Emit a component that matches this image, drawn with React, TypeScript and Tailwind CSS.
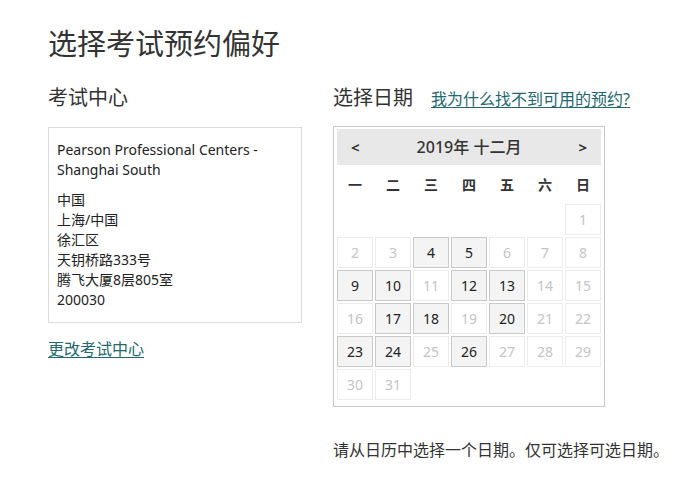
import React from 'react';

const FONT = { fontFamily: '"Noto Sans", "Noto Sans CJK SC", sans-serif' };

const available = new Set([4, 5, 9, 10, 12, 13, 17, 18, 20, 23, 24, 26]);
const weekdays = ['一', '二', '三', '四', '五', '六', '日'];

function Calendar() {
  // December 2019 starts on Sunday -> 6 blanks (Monday first)
  const cells: (number | null)[] = [];
  for (let i = 0; i < 6; i++) cells.push(null);
  for (let d = 1; d <= 31; d++) cells.push(d);

  return (
    <div className="w-[272px] border border-[#c8c8c8] px-[3px] pt-[2px] pb-[6px]">
      <div className="h-[36px] bg-[#e8e8e8] flex items-center justify-between px-[14px] text-[#333]">
        <span className="text-[15px] font-bold">&lt;</span>
        <span className="text-[16px] font-medium">2019年 十二月</span>
        <span className="text-[15px] font-bold">&gt;</span>
      </div>
      <div className="grid grid-cols-7 gap-x-[2px] gap-y-[2px] mt-[1px]">
        {weekdays.map((w) => (
          <div key={w} className="h-[36px] flex items-center justify-center text-[14px] font-bold text-[#333]">
            {w}
          </div>
        ))}
        {cells.map((d, i) =>
          d === null ? (
            <div key={'b' + i} className="h-[31px]" />
          ) : available.has(d) ? (
            <div
              key={d}
              className="h-[31px] flex items-center justify-center border border-[#c9c9c9] bg-[#f4f4f4] text-[14px] text-[#222]"
            >
              {d}
            </div>
          ) : (
            <div
              key={d}
              className="h-[31px] flex items-center justify-center border border-[#ececec] bg-white text-[14px] text-[#c4c4c4]"
            >
              {d}
            </div>
          )
        )}
      </div>
    </div>
  );
}

export default function App() {
  return (
    <div className="w-[698px] h-[488px] bg-white pl-[48px] pt-[24px] text-[#333]" style={FONT}>
      <h1 className="text-[29px] leading-[40px] text-[#333]">选择考试预约偏好</h1>

      <div className="flex gap-[31px] mt-[20px]">
        {/* Left column */}
        <div className="w-[254px]">
          <h2 className="text-[20px] leading-[28px]">考试中心</h2>
          <div className="mt-[15px] border border-[#dcdcdc] px-[8px] pt-[12px] pb-[12px] text-[14px] leading-[20px] text-[#222]">
            <div>Pearson Professional Centers - Shanghai South</div>
            <div className="mt-[10px]">
              <div>中国</div>
              <div>上海/中国</div>
              <div>徐汇区</div>
              <div>天钥桥路333号</div>
              <div>腾飞大厦8层805室</div>
              <div>200030</div>
            </div>
          </div>
          <a href="#" className="inline-block mt-[14px] text-[16px] text-[#23686f] underline underline-offset-2">
            更改考试中心
          </a>
        </div>

        {/* Right column */}
        <div>
          <div className="flex items-baseline gap-[18px]">
            <h2 className="text-[20px] leading-[28px]">选择日期</h2>
            <a href="#" className="text-[16px] text-[#23686f] underline underline-offset-2">
              我为什么找不到可用的预约?
            </a>
          </div>
          <div className="mt-[14px]">
            <Calendar />
          </div>
          <p className="mt-[31px] text-[16px] text-[#333]">请从日历中选择一个日期。仅可选择可选日期。</p>
        </div>
      </div>
    </div>
  );
}
